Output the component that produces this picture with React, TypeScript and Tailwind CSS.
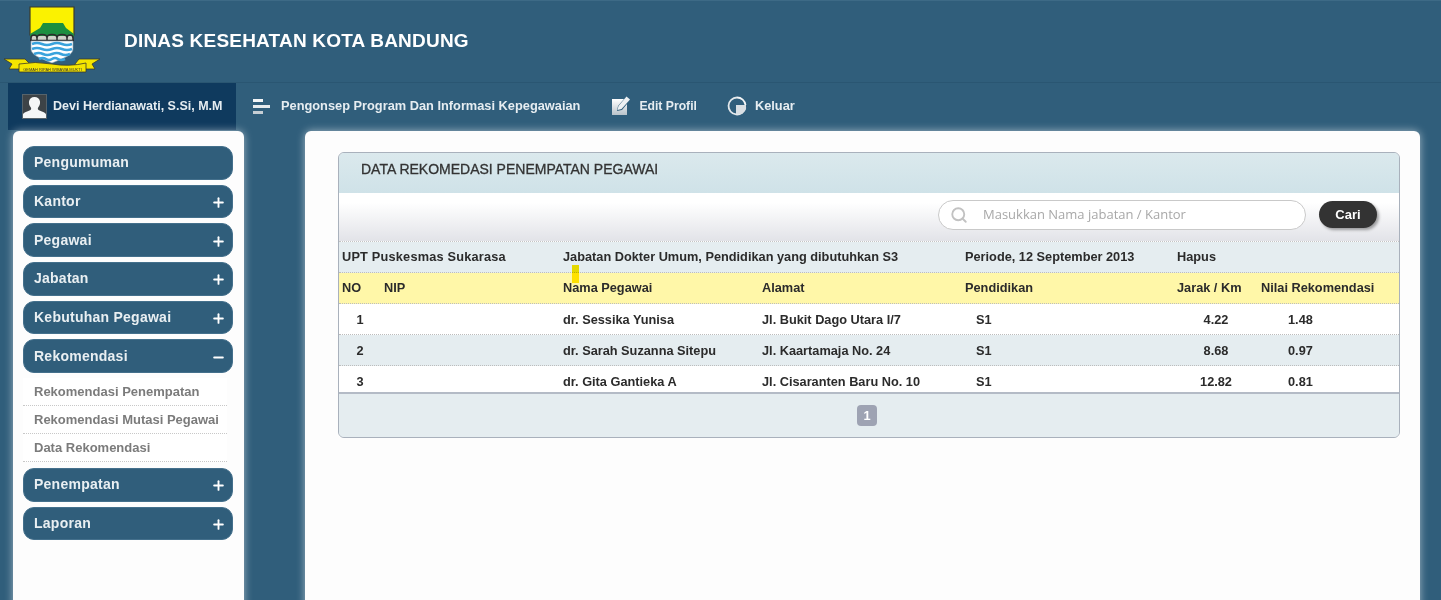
import { Plus, Minus, Search } from 'lucide-react';

const menu = [
  { label: 'Pengumuman' },
  { label: 'Kantor', icon: 'plus' },
  { label: 'Pegawai', icon: 'plus' },
  { label: 'Jabatan', icon: 'plus' },
  { label: 'Kebutuhan Pegawai', icon: 'plus' },
  { label: 'Rekomendasi', icon: 'minus', children: ['Rekomendasi Penempatan', 'Rekomendasi Mutasi Pegawai', 'Data Rekomendasi'] },
  { label: 'Penempatan', icon: 'plus' },
  { label: 'Laporan', icon: 'plus' },
];

const rows = [
  { no: '1', nama: 'dr. Sessika Yunisa', alamat: 'Jl. Bukit Dago Utara I/7', pend: 'S1', jarak: '4.22', nilai: '1.48', h: 'h-[31px] pt-px', bg: 'bg-white' },
  { no: '2', nama: 'dr. Sarah Suzanna Sitepu', alamat: 'Jl. Kaartamaja No. 24', pend: 'S1', jarak: '8.68', nilai: '0.97', h: 'h-[31px] pt-px', bg: 'bg-[#e5edf0]' },
  { no: '3', nama: 'dr. Gita Gantieka A', alamat: 'Jl. Cisaranten Baru No. 10', pend: 'S1', jarak: '12.82', nilai: '0.81', h: 'h-[26px] pt-[5px]', bg: 'bg-white' },
];

const gridCols = 'grid grid-cols-[42px_179px_199px_203px_212px_84px_1fr] items-center';

function Logo() {
  return (
    <svg width="98" height="70" viewBox="0 0 98 70" className="mt-[5px] ml-[4px]">
      <path d="M26 1h44v28H26z" fill="#fbf200" stroke="#3b3b2a" strokeWidth="1.2" />
      <path d="M26 28l10-6 3-5h20l3 5 8 6v3H26z" fill="#1c8f3f" />
      <path d="M27 35v-5h42v5z" fill="#cfd3c8" />
      <path d="M27 34v-2q0-3 3-3t3 3M33 34v-2q0-3.500 5-3.500t5 3.500v2M43 34v-2q0-3.500 5-3.500t5 3.500v2M53 34v-2q0-3.500 5-3.500t5 3.500v2M63 34v-2q0-3 3-3t3 3v2" fill="none" stroke="#2c2c2c" strokeWidth="1.500" />
      <path d="M26 34.500h44" stroke="#2c2c2c" strokeWidth="1.500" />
      <path d="M27 35h42v8c0 6-9 9-21 14-12-5-21-8-21-14z" fill="#ffffff" stroke="#8aa0ad" strokeWidth="0.6" />
      <path d="M28 38q5-2 10 0t10 0 10 0 10 0M28 43q5-2 10 0t10 0 10 0 10 0M30 48q5-2 9 0t9 0 9 0 9 0M35 53q4-2 7 0t6 0 6 0 7 0" fill="none" stroke="#3aa3dc" strokeWidth="2.600" />
      <path d="M0 53h21l5 5v5H5l3-5z" fill="#f5e600" stroke="#3b3b2a" strokeWidth="0.8" />
      <path d="M96 53H75l-4 5v5h20l-3-5z" fill="#f5e600" stroke="#3b3b2a" strokeWidth="0.8" />
      <path d="M15 58q16-3 33 0t34-1v9H15z" fill="#f5e600" stroke="#3b3b2a" strokeWidth="0.8" />
      <text x="48.500" y="64.500" textAnchor="middle" fontSize="4" fill="#333" fontFamily="Liberation Sans, sans-serif">GEMAH RIPAH WIBAWA MUKTI</text>
    </svg>
  );
}

function UserIcon() {
  return (
    <svg width="25" height="25" viewBox="0 0 25 25" className="shrink-0">
      <rect x="0.500" y="0.500" width="24" height="24" fill="#3d4347" stroke="#56636b" />
      <path d="M1 24v-3.500c0-2 5-3 7.500-4.500 1-.8.8-2 0-3-1.200-1.500-1.700-3.500-1.500-5.500.3-2.600 2.500-4.500 5.500-4.500s5.200 1.900 5.500 4.500c.2 2-.3 4-1.500 5.500-.8 1-1 2.200 0 3 2.500 1.500 7.500 2.500 7.500 4.500V24z" fill="#f4f6f7" />
    </svg>
  );
}

function MenuIcon() {
  return (
    <svg width="17" height="17" viewBox="0 0 17 17" className="shrink-0">
      <rect x="0" y="1" width="10" height="3" fill="#f2f5f7" />
      <rect x="0" y="7" width="17" height="3" fill="#e6ebee" />
      <rect x="0" y="13" width="10" height="3" fill="#c6ced4" />
    </svg>
  );
}

function EditIcon() {
  return (
    <svg width="20" height="20" viewBox="0 0 20 20" className="-mt-[2px] shrink-0">
      <defs>
        <linearGradient id="ed" x1="0" y1="0" x2="0" y2="1">
          <stop offset="0" stopColor="#ffffff" />
          <stop offset="1" stopColor="#b9c3ca" />
        </linearGradient>
      </defs>
      <path d="M1 3h12l-6 7-1 5 5-1 5-6v11H1z" fill="url(#ed)" />
      <path d="M15.500 0.500l3.500 3-8.500 9.500-4 1 1-4z" fill="#eef1f3" />
    </svg>
  );
}

function LogoutIcon() {
  return (
    <svg width="20" height="20" viewBox="0 0 20 20" className="-mt-[2px] shrink-0">
      <path d="M10 1.500a8.500 8.500 0 1 0 8.400 10" fill="none" stroke="#e3e8eb" strokeWidth="1.800" />
      <path d="M10 1.500a8.500 8.500 0 0 1 8.500 7.500" fill="none" stroke="#f4f6f7" strokeWidth="1.800" />
      <path d="M9 9h10v4l-4 5H9z" fill="#d9dfe3" />
    </svg>
  );
}

export default function App() {
  return (
    <div className="h-[600px] overflow-hidden bg-[#305e7b] font-['Liberation_Sans',Arial,sans-serif]">
      <header className="flex h-[83px] items-start border-t border-b border-t-[#3d6a86] border-b-[#2a5672]">
        <Logo />
        <h1 className="mt-[26px] ml-[22px] text-[19px] font-bold tracking-[0.2px] text-white">DINAS KESEHATAN KOTA BANDUNG</h1>
      </header>

      <nav className="flex h-[47px] items-center pl-[8px] text-[12.800px] font-bold text-[#e6edf1]">
        <div className="flex h-full w-[228px] items-center gap-[6px] bg-[#0f3a5e] pl-[14px]">
          <UserIcon />
          <span className="-mt-px text-[12.500px]">Devi Herdianawati, S.Si, M.M</span>
        </div>
        <div className="ml-[17px] flex items-center gap-[11px]">
          <MenuIcon />
          <span className="-mt-px">Pengonsep Program Dan Informasi Kepegawaian</span>
        </div>
        <div className="ml-[31px] flex items-center gap-[8px]">
          <EditIcon />
          <span className="-mt-px text-[12.200px]">Edit Profil</span>
        </div>
        <div className="ml-[30px] flex items-center gap-[8px]">
          <LogoutIcon />
          <span className="-mt-px">Keluar</span>
        </div>
      </nav>

      <div className="flex items-start pl-[13px] pt-px">
        <aside className="h-[480px] w-[231px] rounded-t-[6px] bg-[#fdfdfd] pr-[11px] pl-[10px] pt-[15px] shadow-[0_0_8px_rgba(255,255,255,0.55)]">
          {menu.map((m) => (
            <div key={m.label}>
              <div className="mb-[5px] flex h-[33.670px] items-center justify-between rounded-[11px] border border-[#44708c] bg-[#305e7b] pr-[6px] pl-[10px] text-[14px] font-bold tracking-[0.25px] text-[#e9eff2]">
                <span>{m.label}</span>
                {m.icon === 'plus' && <Plus size={15} strokeWidth={3} className="mt-[2px] text-white" />}
                {m.icon === 'minus' && <Minus size={15} strokeWidth={3} className="mt-[2px] text-white" />}
              </div>
              {m.children && (
                <div className="mb-[6px] w-[204px] text-[13px] font-bold text-[#7b7b7b]">
                  {m.children.map((c) => (
                    <div key={c} className="flex h-[28px] items-center border-b border-dotted border-[#c8c8c8] bg-white pl-[11px]">{c}</div>
                  ))}
                </div>
              )}
            </div>
          ))}
        </aside>

        <main className="ml-[61px] h-[480px] w-[1115px] rounded-t-[6px] bg-[#fdfdfd] pr-[20px] pl-[33px] pt-[21px] shadow-[0_0_8px_rgba(255,255,255,0.55)]">
          <section className="relative h-[286px] overflow-hidden rounded-[6px] border border-[#a9b1bc] bg-[#e5edf0] text-[12.750px] font-bold text-[#2b2b2b]">
            <div className="h-[40px] bg-gradient-to-b from-[#dbe9ed] to-[#cfe2e8] pl-[22px] pt-[6px] text-[14px] font-normal text-[#333] [-webkit-text-stroke:0.3px_#333]">
              DATA REKOMEDASI PENEMPATAN PEGAWAI
            </div>
            <div className="flex h-[49px] items-center border-b border-dotted border-[#c4c4c4] bg-gradient-to-b from-white from-20% to-[#e2e3e8] pb-[5px] pl-[599px]">
              <div className="flex h-[30px] w-[368px] items-center rounded-full border border-[#c9c9c9] bg-white pl-[11px] font-['Open_Sans',sans-serif] text-[13px] font-normal text-[#a8a8a8]">
                <Search size={18} strokeWidth={2.500} className="text-[#c2c2c2]" />
                <span className="ml-[15px]">Masukkan Nama jabatan / Kantor</span>
              </div>
              <button className="ml-[13px] h-[27px] w-[58px] rounded-full bg-[#333333] text-[13px] font-bold text-white shadow-[2px_2px_3px_rgba(0,0,0,0.35)]">Cari</button>
            </div>

            <div className={`${gridCols} h-[31px] border-b border-dotted border-[#bdbdbd] bg-[#e5edf0]`}>
              <span className="col-span-2 pl-[3px] tracking-[0.2px]">UPT Puskesmas Sukarasa</span>
              <span className="col-span-2 pl-[3px]">Jabatan Dokter Umum, Pendidikan yang dibutuhkan S3</span>
              <span className="pl-[3px]">Periode, 12 September 2013</span>
              <span className="col-span-2 pl-[3px]">Hapus</span>
            </div>
            <div className={`${gridCols} h-[31px] border-b border-dotted border-[#bdbdbd] bg-[#fff7a8]`}>
              <span className="pl-[3px]">NO</span>
              <span className="pl-[3px]">NIP</span>
              <span className="pl-[3px]">Nama Pegawai</span>
              <span className="pl-[3px]">Alamat</span>
              <span className="pl-[3px]">Pendidikan</span>
              <span className="pl-[3px]">Jarak / Km</span>
              <span className="pl-[3px]">Nilai Rekomendasi</span>
            </div>
            {rows.map((r) => (
              <div key={r.no} className={`${gridCols} ${r.h} ${r.bg} ${r.no !== '3' ? 'border-b border-dotted border-[#bdbdbd]' : ''}`}>
                <span className="text-center">{r.no}</span>
                <span />
                <span className="pl-[3px]">{r.nama}</span>
                <span className="pl-[3px]">{r.alamat}</span>
                <span className="pl-[14px]">{r.pend}</span>
                <span className="text-center">{r.jarak}</span>
                <span className="pl-[30px]">{r.nilai}</span>
              </div>
            ))}
            <div className="flex h-[45px] items-center justify-center border-t-2 border-[#b4bbc6] bg-[#e5edf0] pr-[4px]">
              <span className="flex h-[21px] w-[20px] items-center justify-center rounded-[4px] bg-[#9ea3b3] text-white">1</span>
            </div>
            <span className="absolute top-[112px] left-[233px] h-[18px] w-[7px] bg-[#ffe900] mix-blend-multiply" />
          </section>
        </main>
      </div>
    </div>
  );
}
